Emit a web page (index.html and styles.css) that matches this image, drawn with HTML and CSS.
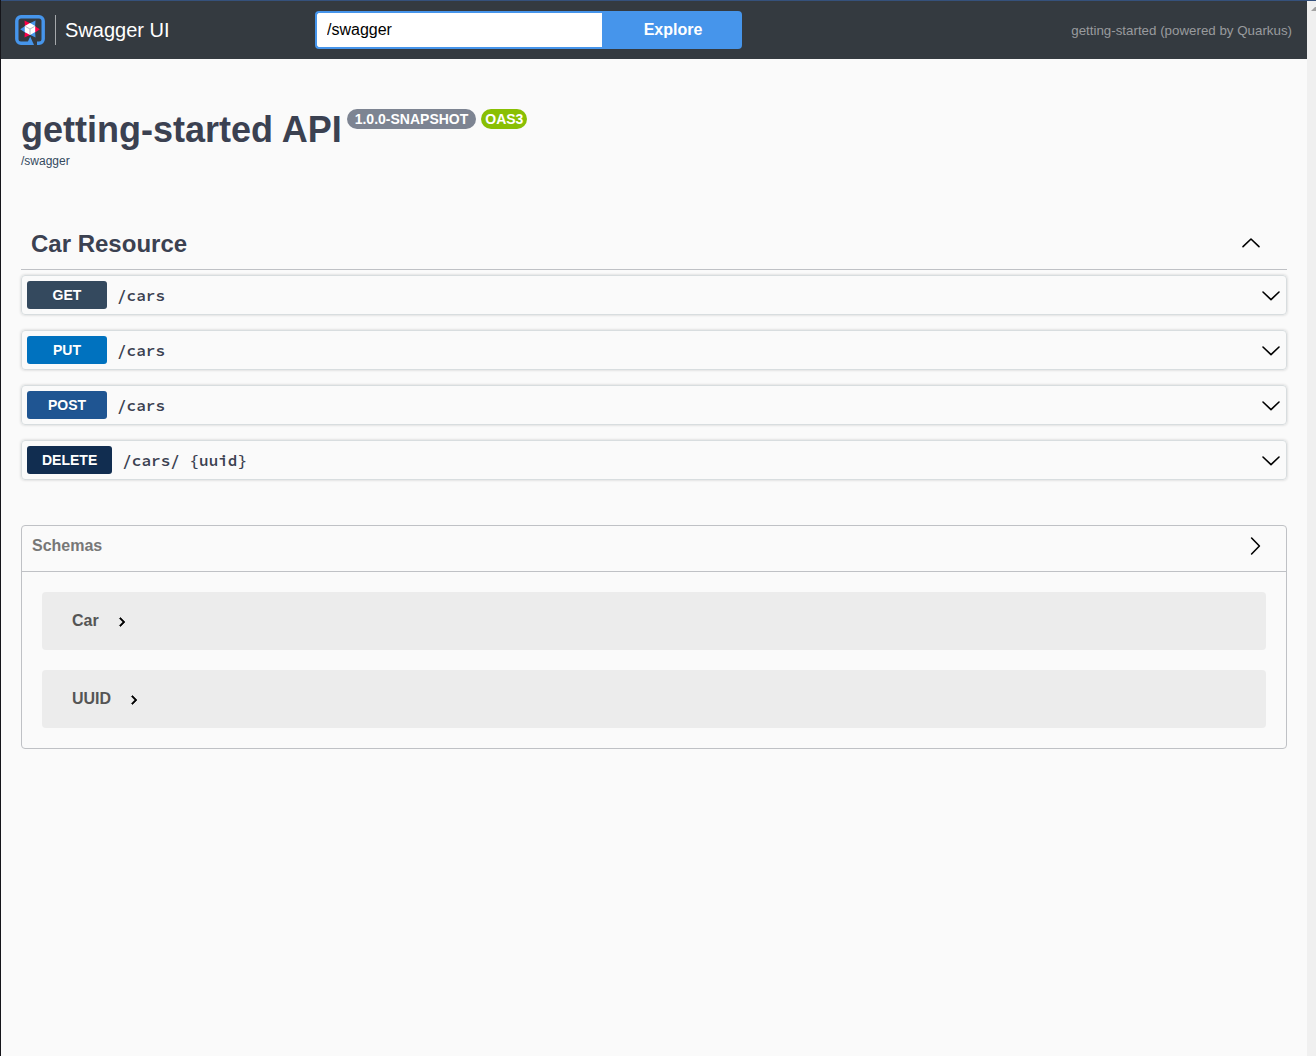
FILE: index.html
```html
<!DOCTYPE html>
<html lang="en">
<head>
<meta charset="utf-8">
<title>Swagger UI</title>
<link rel="stylesheet" href="styles.css">
</head>
<body>
<svg class="sprite" aria-hidden="true">
  <symbol id="arrow-down" viewBox="0 0 20 20"><path d="M2 7l8 7.600L18 7" fill="none" stroke="#000" stroke-width="1.600" stroke-linecap="round" stroke-linejoin="round"/></symbol>
  <symbol id="arrow-up" viewBox="0 0 20 20"><path d="M2 12.600 10 5l8 7.600" fill="none" stroke="#000" stroke-width="1.600" stroke-linecap="round" stroke-linejoin="round"/></symbol>
  <symbol id="arrow-right" viewBox="0 0 20 20"><path d="M5.600 2l7.800 8-7.800 8" fill="none" stroke="#000" stroke-width="1.600" stroke-linecap="round" stroke-linejoin="round"/></symbol>
  <symbol id="chevron" viewBox="0 0 24 24"><path d="M10 6 8.590 7.410 13.170 12l-4.580 4.590L10 18l6-6z" stroke="#000" stroke-width=".8"/></symbol>
</svg>
<div class="shell">
  <div class="page">
    <header class="topbar">
      <a class="brand" href="#">
        <svg class="logo" viewBox="0 0 30 30" aria-hidden="true">
          <path d="M17 28.200H6A4.200 4.200 0 0 1 1.800 24V6A4.200 4.200 0 0 1 6 1.800h18A4.200 4.200 0 0 1 28.200 6v18a4.200 4.200 0 0 1-4.200 4.200h-2" fill="none" stroke="#4695eb" stroke-width="3.400"/>
          <path d="M15.200 21.500l3.800 8.500h-7.600z" fill="#4695eb"/>
          <path d="M9.500 5.600l6 3-5.500 4zM24.800 14.200l-6 4.200v-8zM9.500 22.600l.5-7 6 4z" fill="#ff004a"/>
          <path d="M20.500 5.600l-.5 7-5.500-4zM5.200 14.200l6-4v8zM20.500 22.600l-6-3 5.500-4z" fill="#4695eb"/>
          <path d="M15 8l5.200 3v6L15 20l-5.200-3v-6z" fill="#fff"/>
          <path d="M15 14v6M10.500 11.500 15 14l4.500-2.500" fill="none" stroke="#a4aab1" stroke-width=".8"/>
        </svg>
        <span class="brand-name">Swagger UI</span>
      </a>
      <form class="explore">
        <input class="url" type="text" value="/swagger" aria-label="API definition URL">
        <button class="explore-button" type="button">Explore</button>
      </form>
      <small class="powered">getting-started (powered by Quarkus)</small>
    </header>
    <main class="content">
      <section class="info">
        <div class="heading">
          <h1 class="title">getting-started API</h1>
          <span class="pill version">1.0.0-SNAPSHOT</span>
          <span class="pill oas">OAS3</span>
        </div>
        <a class="spec-link" href="#">/swagger</a>
      </section>
      <section class="tag">
        <div class="tag-head">
          <h2 class="tag-title">Car Resource</h2>
          <button class="icon-button" type="button" aria-label="Collapse Car Resource"><svg class="arrow"><use href="#arrow-up"/></svg></button>
        </div>
        <div class="operations">
          <div class="operation"><span class="method get">GET</span><span class="path">/cars</span><button class="icon-button" type="button" aria-label="Expand GET /cars"><svg class="arrow"><use href="#arrow-down"/></svg></button></div>
          <div class="operation"><span class="method put">PUT</span><span class="path">/cars</span><button class="icon-button" type="button" aria-label="Expand PUT /cars"><svg class="arrow"><use href="#arrow-down"/></svg></button></div>
          <div class="operation"><span class="method post">POST</span><span class="path">/cars</span><button class="icon-button" type="button" aria-label="Expand POST /cars"><svg class="arrow"><use href="#arrow-down"/></svg></button></div>
          <div class="operation"><span class="method delete">DELETE</span><span class="path">/cars/ {uuid}</span><button class="icon-button" type="button" aria-label="Expand DELETE /cars/{uuid}"><svg class="arrow"><use href="#arrow-down"/></svg></button></div>
        </div>
      </section>
      <section class="schemas">
        <div class="schemas-head">
          <h2 class="schemas-title">Schemas</h2>
          <button class="icon-button" type="button" aria-label="Toggle schemas"><svg class="arrow"><use href="#arrow-right"/></svg></button>
        </div>
        <div class="models">
          <div class="model"><span>Car</span><button class="icon-button" type="button" aria-label="Expand Car"><svg class="chevron"><use href="#chevron"/></svg></button></div>
          <div class="model"><span>UUID</span><button class="icon-button" type="button" aria-label="Expand UUID"><svg class="chevron"><use href="#chevron"/></svg></button></div>
        </div>
      </section>
    </main>
  </div>
  <div class="scroll-track" aria-hidden="true"><svg class="scroll-arrow" viewBox="0 0 5 4"><path d="M0 4 4 0h1v4z" fill="#a3a3a3"/></svg></div>
</div>
</body>
</html>
```
FILE: styles.css
```css
* { box-sizing: border-box; }

body {
  margin: 0;
  background: #fafafa;
  color: #3b4151;
  font-family: "Liberation Sans", Arial, sans-serif;
}

h1, h2 { margin: 0; }
a { text-decoration: none; }
.sprite { display: none; }

.shell {
  display: flex;
  min-height: 100vh;
  border-left: 1px solid #15151a;
}

.page { flex: 1; min-width: 0; }

.scroll-track {
  display: flex;
  justify-content: flex-end;
  align-items: flex-start;
  width: 9px;
  padding-top: 6px;
  background: #f0f0f0;
  border-top: 1px solid #35517c;
}
.scroll-arrow { width: 5px; height: 4px; }

.topbar {
  display: flex;
  align-items: center;
  padding: 10px 15px 10px 14px;
  background: #343a40;
  border-top: 1px solid #35517c;
}

.brand {
  display: flex;
  align-items: center;
  width: 300px;
  color: #fff;
}
.logo { width: 30px; height: 30px; }
.brand-name {
  margin-left: 10px;
  padding-left: 9px;
  border-left: 1px solid #a5a8ab;
  font-size: 20px;
  line-height: 30px;
}

.explore { display: flex; width: 427px; }
.url {
  flex: 1;
  min-width: 0;
  height: 38px;
  padding: 0 10px;
  border: 2px solid #4695eb;
  border-right: 0;
  border-radius: 4px 0 0 4px;
  background: #fff;
  color: #000;
  font: 16px "Liberation Sans", Arial, sans-serif;
}
.explore-button {
  width: 140px;
  height: 38px;
  padding: 0 0 0 2px;
  border: 0;
  border-radius: 0 4px 4px 0;
  background: #4695eb;
  color: #fff;
  font: bold 16px "Liberation Sans", Arial, sans-serif;
}
.powered {
  margin-left: auto;
  color: #999b9e;
  font-size: smaller;
}

.content { padding: 50px 20px; }

.heading {
  display: flex;
  align-items: flex-start;
  gap: 5px;
}
.title { font-size: 36px; line-height: 41px; }
.pill {
  border-radius: 10px;
  color: #fff;
  font-size: 14px;
  font-weight: bold;
  line-height: 20px;
}
.version { padding: 0 8px; background: #7d8492; }
.oas { padding: 0 4px; background: #89bf04; }
.spec-link {
  display: block;
  margin-top: 4px;
  color: #34495e;
  font-size: 12px;
  line-height: 14px;
}

.icon-button {
  display: flex;
  padding: 0;
  border: 0;
  background: none;
}
.arrow { width: 20px; height: 20px; }

.tag { margin-top: 50px; }
.tag-head {
  display: flex;
  justify-content: space-between;
  align-items: center;
  height: 52px;
  padding: 0 26px 0 10px;
  border-bottom: 1px solid #bfc1c5;
}
.tag-title { font-size: 24px; line-height: 28px; }

.operations {
  display: flex;
  flex-direction: column;
  gap: 15px;
  padding-top: 5px;
}
.operation {
  display: flex;
  align-items: center;
  gap: 10px;
  padding: 5px;
  border: 1px solid #d8dddf;
  border-radius: 4px;
  box-shadow: 0 0 3px rgba(0, 0, 0, 0.19);
}
.operation .icon-button { margin-left: auto; }
.method {
  min-width: 80px;
  padding: 0 15px;
  border-radius: 3px;
  color: #fff;
  font-size: 14px;
  font-weight: bold;
  line-height: 28px;
  text-align: center;
  text-shadow: 0 1px 0 rgba(0, 0, 0, 0.1);
}
.get { background: #34495e; }
.put { background: #0072bf; }
.post { background: #1f5592; }
.delete { background: #112d50; }
.path {
  font-family: "Source Code Pro", "Liberation Mono", monospace;
  font-size: 16px;
  font-weight: 600;
}

.schemas {
  margin-top: 45px;
  border: 1px solid #bfc1c5;
  border-radius: 4px;
}
.schemas-head {
  display: flex;
  justify-content: space-between;
  padding: 10px 20px 15px 10px;
  border-bottom: 1px solid #bfc1c5;
}
.schemas-title {
  color: #777;
  font-size: 16px;
  line-height: 20px;
}
.models {
  display: flex;
  flex-direction: column;
  gap: 20px;
  padding: 20px;
}
.model {
  display: flex;
  align-items: center;
  gap: 14px;
  height: 58px;
  padding: 0 30px;
  border-radius: 4px;
  background: #ececec;
  color: #555;
  font-size: 16px;
  font-weight: bold;
}
.chevron { width: 18px; height: 18px; margin-top: 2px; }
```
